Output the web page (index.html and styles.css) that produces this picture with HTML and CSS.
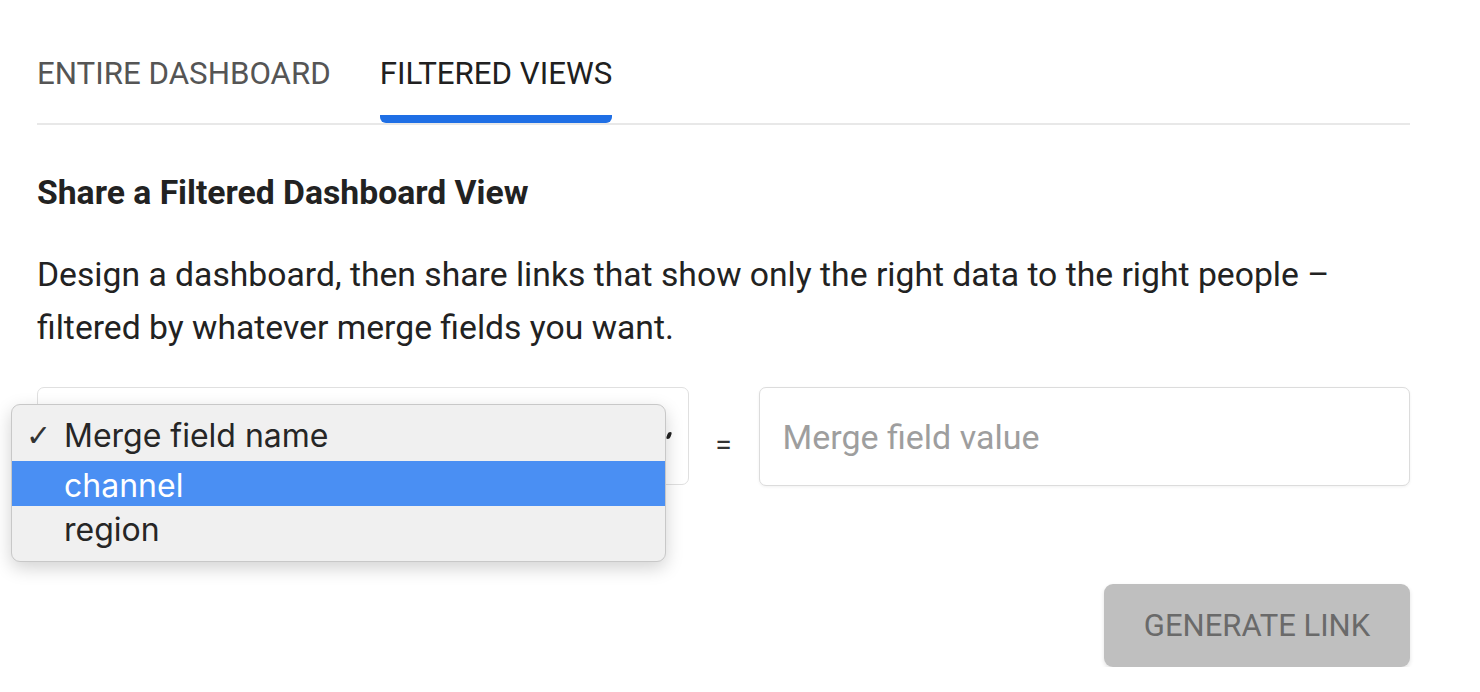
FILE: index.html
```html
<!DOCTYPE html>
<html lang="en">
<head>
    <meta charset="UTF-8">
    <meta name="viewport" content="width=device-width, initial-scale=1.0">
    <title>Share dashboard</title>
    <link rel="stylesheet" href="styles.css">
</head>
<body>
    <div class="panel">
        <div class="tabs">
            <div class="tab">ENTIRE DASHBOARD</div>
            <div class="tab active">FILTERED VIEWS</div>
        </div>

        <h2 class="title">Share a Filtered Dashboard View</h2>
        <p class="intro">Design a dashboard, then share links that show only the right data to the right people &ndash; filtered by whatever merge fields you want.</p>

        <div class="filter-row">
            <div class="select-wrap">
                <div class="select-box">
                    <span class="select-arrow"></span>
                </div>
                <!-- native select popup, opened -->
                <ul class="menu">
                    <li class="menu-item checked"><span class="check">&#10003;</span>Merge field name</li>
                    <li class="menu-item hover">channel</li>
                    <li class="menu-item">region</li>
                </ul>
            </div>
            <div class="equals">=</div>
            <input class="value-input" type="text" placeholder="Merge field value">
        </div>

        <div class="actions">
            <button class="generate" disabled>GENERATE LINK</button>
        </div>
    </div>
</body>
</html>
```

FILE: styles.css
```css
body {
    margin: 0;
    background-color: #fff;
    font-family: Roboto, "Noto Sans", Arial, sans-serif;
    color: #222;
}
.panel {
    padding: 0 70px 0 37px;
}
.tabs {
    display: flex;
    gap: 49px;
    padding-top: 56px;
    border-bottom: 2px solid #e8e8e8;
}
.tab {
    position: relative;
    font-size: 31.25px;
    line-height: 36px;
    padding-bottom: 31px;
    color: #555;
}
.tab.active {
    color: #202020;
}
.tab.active::after {
    content: "";
    position: absolute;
    left: 0;
    right: 0;
    bottom: 0;
    height: 8px;
    background-color: #1f6fe5;
    border-radius: 0 0 6px 6px;
}
.title {
    margin: 48px 0 0;
    font-size: 33.7px;
    line-height: 40px;
    font-weight: 700;
    color: #222;
}
.intro {
    margin: 35px 0 0;
    font-size: 33.7px;
    line-height: 53px;
    color: #222;
}
.filter-row {
    display: grid;
    grid-template-columns: minmax(0, 1fr) 70px minmax(0, 1fr);
    margin-top: 33px;
}
.select-wrap {
    position: relative;
}
.select-box {
    position: relative;
    height: 96px;
    border: 1.5px solid #e0e0e0;
    border-radius: 7px;
    background-color: #fff;
}
.select-arrow {
    position: absolute;
    right: 17px;
    top: 44px;
    width: 4px;
    height: 7px;
    background-color: #222;
    border-radius: 2px;
    transform: skewX(-20deg);
}
.menu {
    position: absolute;
    left: -26px;
    top: 17px;
    width: 653px;
    margin: 0;
    padding: 8px 0 7px;
    list-style: none;
    background-color: #f0f0f0;
    border: 1px solid #c8c8c8;
    border-radius: 9px;
    box-shadow: 0 6px 18px rgba(0, 0, 0, 0.18);
    font-family: Inter, Roboto, sans-serif;
}
.menu-item {
    position: relative;
    height: 48px;
    line-height: 48px;
    padding-left: 52px;
    font-size: 32px;
    color: #262626;
}
.menu-item.hover {
    height: 45px;
    line-height: 50px;
    background-color: #4a8ff3;
    color: #fff;
}
.menu-item.checked {
    line-height: 46px;
}
.check {
    position: absolute;
    left: 14px;
    font-family: "DejaVu Sans", sans-serif;
    font-size: 30px;
    color: #333;
}
.equals {
    display: flex;
    align-items: center;
    justify-content: center;
    padding-top: 16px;
    font-size: 30px;
    color: #333;
}
.value-input {
    width: 100%;
    height: 99px;
    box-sizing: border-box;
    border: 1.5px solid #dcdcdc;
    border-radius: 7px;
    padding: 0 23px;
    font-family: Roboto, "Noto Sans", Arial, sans-serif;
    font-size: 34px;
    color: #222;
    box-shadow: 0 1px 3px rgba(0, 0, 0, 0.06);
}
.value-input::placeholder {
    color: #9e9e9e;
}
.actions {
    display: flex;
    justify-content: flex-end;
    margin-top: 98px;
}
.generate {
    width: 306px;
    height: 83px;
    border: none;
    border-radius: 9px;
    background-color: #bfbfbf;
    color: #6a6a6a;
    font-family: Roboto, "Noto Sans", Arial, sans-serif;
    font-size: 31px;
    box-shadow: 0 2px 4px rgba(0, 0, 0, 0.12);
}
```
